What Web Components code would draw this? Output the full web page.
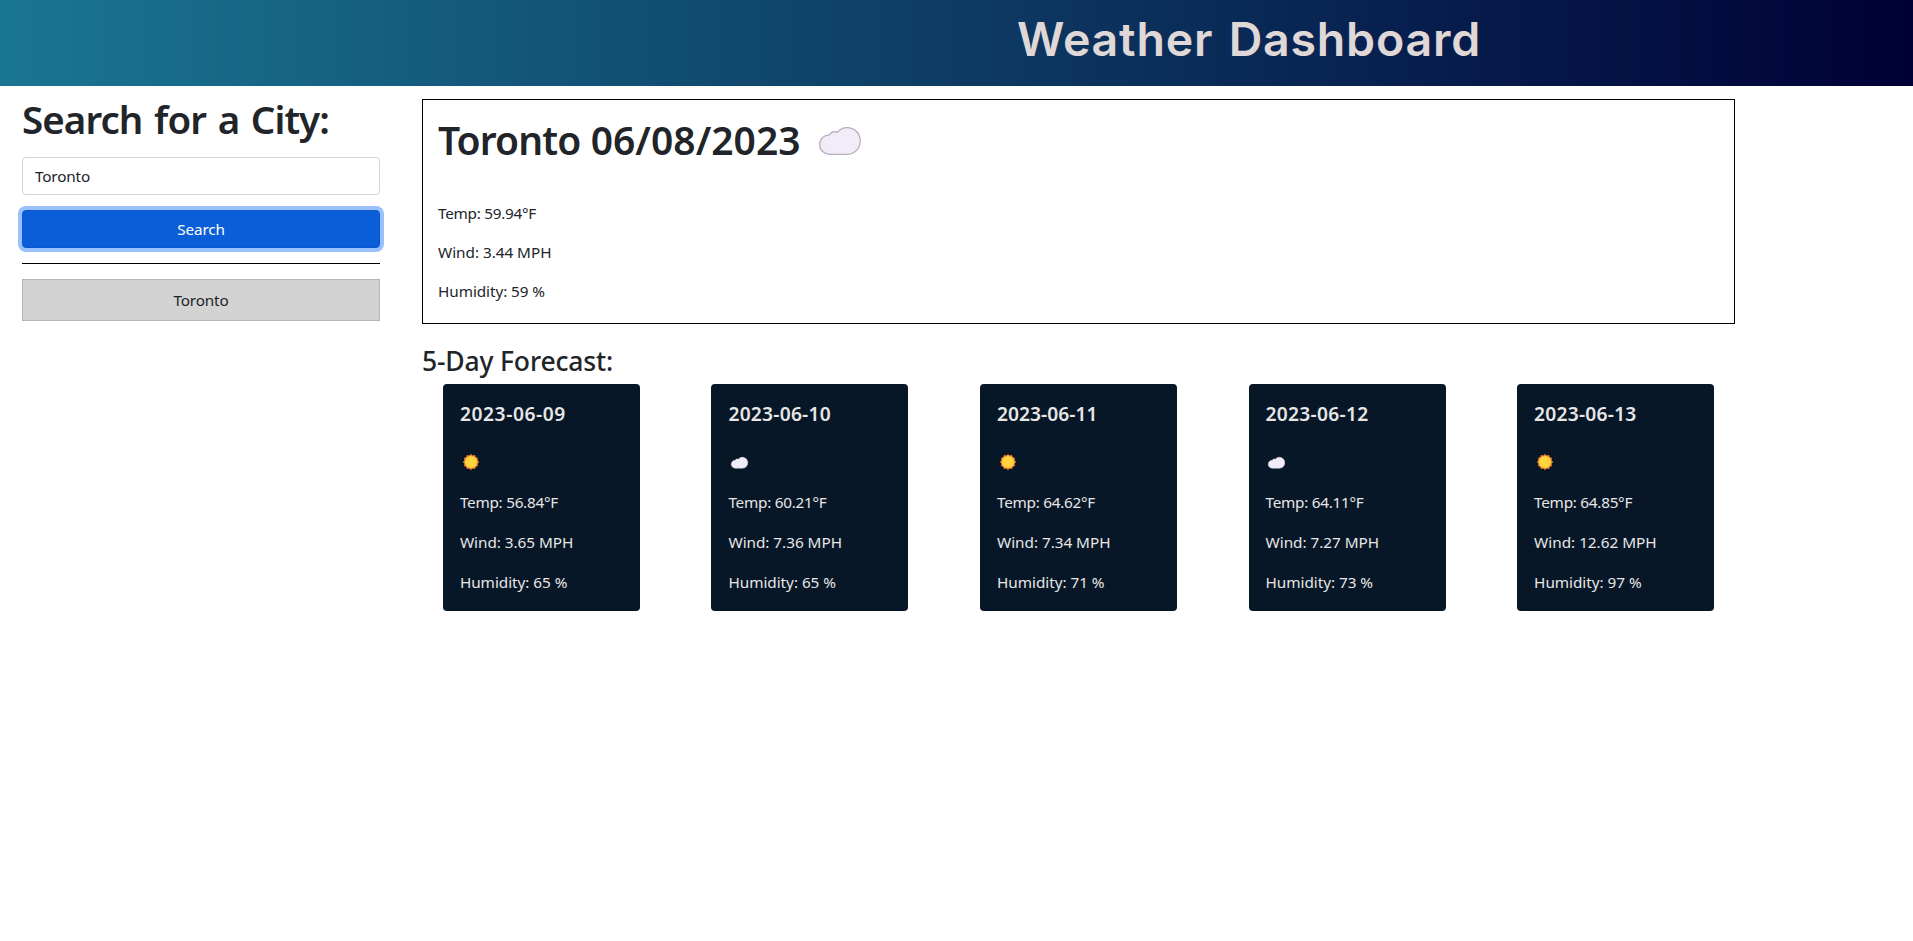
<!DOCTYPE html>
<html lang="en"><head><meta charset="utf-8"><title>Weather Dashboard</title>
<style>
body{margin:0;background:#fff;color:#212529;font-family:"Noto Sans","Open Sans",sans-serif;font-size:15.3px;line-height:24px}
</style></head><body>
<weather-app></weather-app>
<script>
const define=(name,html,setup)=>customElements.define(name,class extends HTMLElement{
  connectedCallback(){
    if(this.shadowRoot)return;
    const t=document.createElement('template');t.innerHTML=html;
    this.attachShadow({mode:'open'}).append(t.content.cloneNode(true));
    if(setup)setup(this,this.shadowRoot);
  }
});

// A single line of text whose tracking is set so that it takes up "w" pixels.
define('fit-text','<style>:host{display:inline-block;white-space:nowrap}</style><span><slot></slot></span>',(el,r)=>{
  const s=r.querySelector('span'),w=+el.getAttribute('w'),n=el.textContent.length;
  s.style.letterSpacing=((w-s.getBoundingClientRect().width)/n)+'px';
});

define('weather-icon','<style>:host{display:block}svg{display:block;width:100%;height:100%;overflow:visible}</style>',(el,r)=>{
  const box=document.createElement('div');box.style.cssText='width:100%;height:100%';
  if(el.getAttribute('kind')==='sun'){
    const p=[];for(let i=0;i<24;i++){const a=i*Math.PI/12-Math.PI/2,q=i%2?6.8:8.1;p.push((8+q*Math.cos(a)).toFixed(2)+','+(8+q*Math.sin(a)).toFixed(2));}
    box.innerHTML=`<svg viewBox="0 0 16 16"><polygon points="${p.join(' ')}" fill="#f8842c"/><circle cx="8" cy="8" r="6.1" fill="#ffd43e"/></svg>`;
  }else{
    const sw=el.hasAttribute('small')?1.4:1.2;
    box.innerHTML=`<svg viewBox="0 0 42 28"><path d="M11 27.3C5 27.3.7 23.2.7 17.7C.7 12 5 8 10.4 7.8C12 5.2 15.3 4 18.5 5.2C21 2.2 24.2.7 28 .7C35.5.7 41.3 6.5 41.3 13.8C41.3 21.5 35.5 27.3 28.5 27.3Z" fill="#f2ebf8" stroke="${el.hasAttribute('small')?'#e0d8e8':'#b4aabe'}" stroke-width="${sw}"/></svg>`;
  }
  r.append(box);
});

define('app-header',`<style>
:host{display:flex;box-sizing:border-box;height:86px;padding:9px 0 0 1017px;background:linear-gradient(90deg,#1a7692 0%,#000036 100%)}
h1{margin:0;font:600 46.5px/60px Inter,sans-serif;color:#e0d7d7;word-spacing:3px}
</style><h1><slot></slot></h1>`);

define('city-search',`<style>
:host{display:block;width:358px}
h1{margin:-1px 0 14px;font-size:38.5px;font-weight:600;line-height:48px;word-spacing:2.5px}
.field{box-sizing:border-box;height:38px;padding:6px 12px;border:1px solid #ced4da;border-radius:4px}
.go{display:block;width:100%;height:38px;margin:15px 0;padding:0;border:1px solid #0a58ca;border-radius:4px;background:#0b5ed7;color:#fff;font:inherit;box-shadow:0 0 0 4px #98c1fe}
.rule{height:1px;background:#000;margin-bottom:15px}
.past{display:block;width:100%;height:42px;padding:0;border:1px solid #b7b7b7;background:#d3d3d3;color:#212529;font:inherit}
</style>
<h1><fit-text w="307">Search for a City:</fit-text></h1>
<div class="field"><fit-text w="55">Toronto</fit-text></div>
<button class="go"><fit-text w="47.5">Search</fit-text></button>
<div class="rule"></div>
<button class="past"><fit-text w="55">Toronto</fit-text></button>`);

define('current-weather',`<style>
:host{display:block;box-sizing:border-box;height:225px;border:1px solid #000;padding:17px 15px}
.top{display:flex;align-items:center;gap:18px;height:48px;margin-bottom:36px}
h1{width:363px;margin:-2px 0 0;font-size:39px;font-weight:600;line-height:48px;white-space:nowrap}
weather-icon{width:42px;height:28px}
p{margin:0 0 15px}
</style>
<div class="top"><h1><fit-text w="142.5">Toronto</fit-text> <fit-text w="210">06/08/2023</fit-text></h1><weather-icon kind="cloud"></weather-icon></div>
<p><fit-text w="98">Temp: 59.94°F</fit-text></p>
<p><fit-text w="113.5">Wind: 3.44 MPH</fit-text></p>
<p><fit-text w="107">Humidity: 59 %</fit-text></p>`);

define('forecast-card','',(el,r)=>{
  const g=n=>el.getAttribute(n);
  r.innerHTML=`<style>
:host{display:block;box-sizing:border-box;width:197px;height:227px;padding:18px 17px 17px;border-radius:4px;background:#071727;color:#e8e6e6}
h5{margin:0 0 28px;font-size:19.2px;font-weight:600;line-height:24px}
.icon{height:16px;margin-bottom:20px}
.sun{width:16px;height:16px;margin-left:3px}
.cloud{width:17px;height:11.5px;margin-left:2.5px;padding-top:2.5px}
p{margin:0 0 16px}
</style>
<h5><fit-text w="${g('dw')}">${g('date')}</fit-text></h5>
<div class="icon"><weather-icon small class="${g('kind')}" kind="${g('kind')}"></weather-icon></div>
<p><fit-text w="98">Temp: ${g('temp')}°F</fit-text></p>
<p><fit-text w="${g('ww')||113.5}">Wind: ${g('wind')} MPH</fit-text></p>
<p><fit-text w="107.5">Humidity: ${g('hum')} %</fit-text></p>`;
});

define('weather-app',`<style>
:host{display:block}
main{display:flex;gap:42px;padding:10px 0 0 22px}
.results{width:1313px;padding-top:3px}
h2{margin:22px 0 7px;font-size:26.5px;font-weight:500;line-height:31px}
.cards{display:flex;justify-content:space-between;padding:0 20.9px}
</style>
<app-header><fit-text w="464">Weather Dashboard</fit-text></app-header>
<main>
<city-search></city-search>
<div class="results">
<current-weather></current-weather>
<h2><fit-text w="191">5-Day Forecast:</fit-text></h2>
<div class="cards">
<forecast-card date="2023-06-09" dw="106" kind="sun" temp="56.84" wind="3.65" hum="65"></forecast-card>
<forecast-card date="2023-06-10" dw="102.5" kind="cloud" temp="60.21" wind="7.36" hum="65"></forecast-card>
<forecast-card date="2023-06-11" dw="100.5" kind="sun" temp="64.62" wind="7.34" hum="71"></forecast-card>
<forecast-card date="2023-06-12" dw="103" kind="cloud" temp="64.11" wind="7.27" hum="73"></forecast-card>
<forecast-card date="2023-06-13" dw="102.5" kind="sun" temp="64.85" wind="12.62" ww="122.5" hum="97"></forecast-card>
</div></div></main>`);
</script></body></html>
